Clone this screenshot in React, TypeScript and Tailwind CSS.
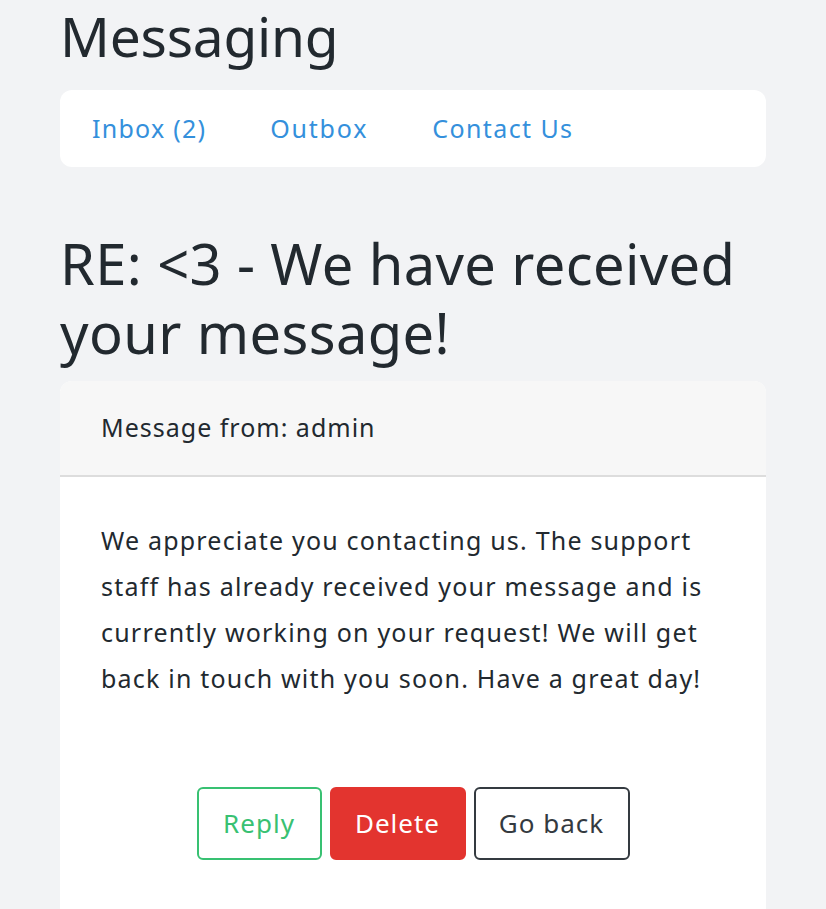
export default function App() {
  return (
    <div
      className="min-h-screen bg-[#f2f3f5] px-[60px] text-[#22292f]"
      style={{ fontFamily: '"Noto Sans", "Open Sans", sans-serif' }}
    >
      <h1 className="text-[55px] leading-[72px] font-normal tracking-[-0.2px]">Messaging</h1>
      <nav className="mt-[18px] flex h-[77px] items-center rounded-xl bg-white">
        <a className="px-8 text-[25px] tracking-[1.25px] text-[#3490dc]" href="#">Inbox (2)</a>
        <a className="px-8 text-[25px] tracking-[1.8px] text-[#3490dc]" href="#">Outbox</a>
        <a className="px-8 text-[25px] tracking-[1.4px] text-[#3490dc]" href="#">Contact Us</a>
      </nav>
      <h2 className="mt-[62px] text-[56px] leading-[69px] font-normal tracking-[0.4px]">
        RE: &lt;3 - We have received your message!
      </h2>
      <div className="mt-[14px] overflow-hidden rounded-t-xl bg-white">
        <div className="flex h-[96px] items-center border-b-2 border-[#dddddd] bg-[#f7f7f7] px-[41px] text-[25px] tracking-[1px]">
          Message from: admin
        </div>
        <div className="px-[41px] pt-[40px] pb-[60px]">
          <p className="text-[25px] leading-[46px] tracking-[1.2px]">
            We appreciate you contacting us. The support staff has already received your message and is currently working on your request! We will get back in touch with you soon. Have a great day!
          </p>
          <div className="mt-[86px] flex justify-center gap-2">
            <button className="h-[73px] w-[125px] rounded-md border-2 border-[#38c172] bg-white text-[26px] tracking-[1px] text-[#38c172]">Reply</button>
            <button className="h-[73px] w-[136px] rounded-md border-2 border-[#e3342f] bg-[#e3342f] text-[26px] tracking-[1px] text-white">Delete</button>
            <button className="h-[73px] w-[156px] rounded-md border-2 border-[#343a40] bg-white text-[26px] tracking-[1px] text-[#343a40]">Go back</button>
          </div>
        </div>
      </div>
    </div>
  );
}
